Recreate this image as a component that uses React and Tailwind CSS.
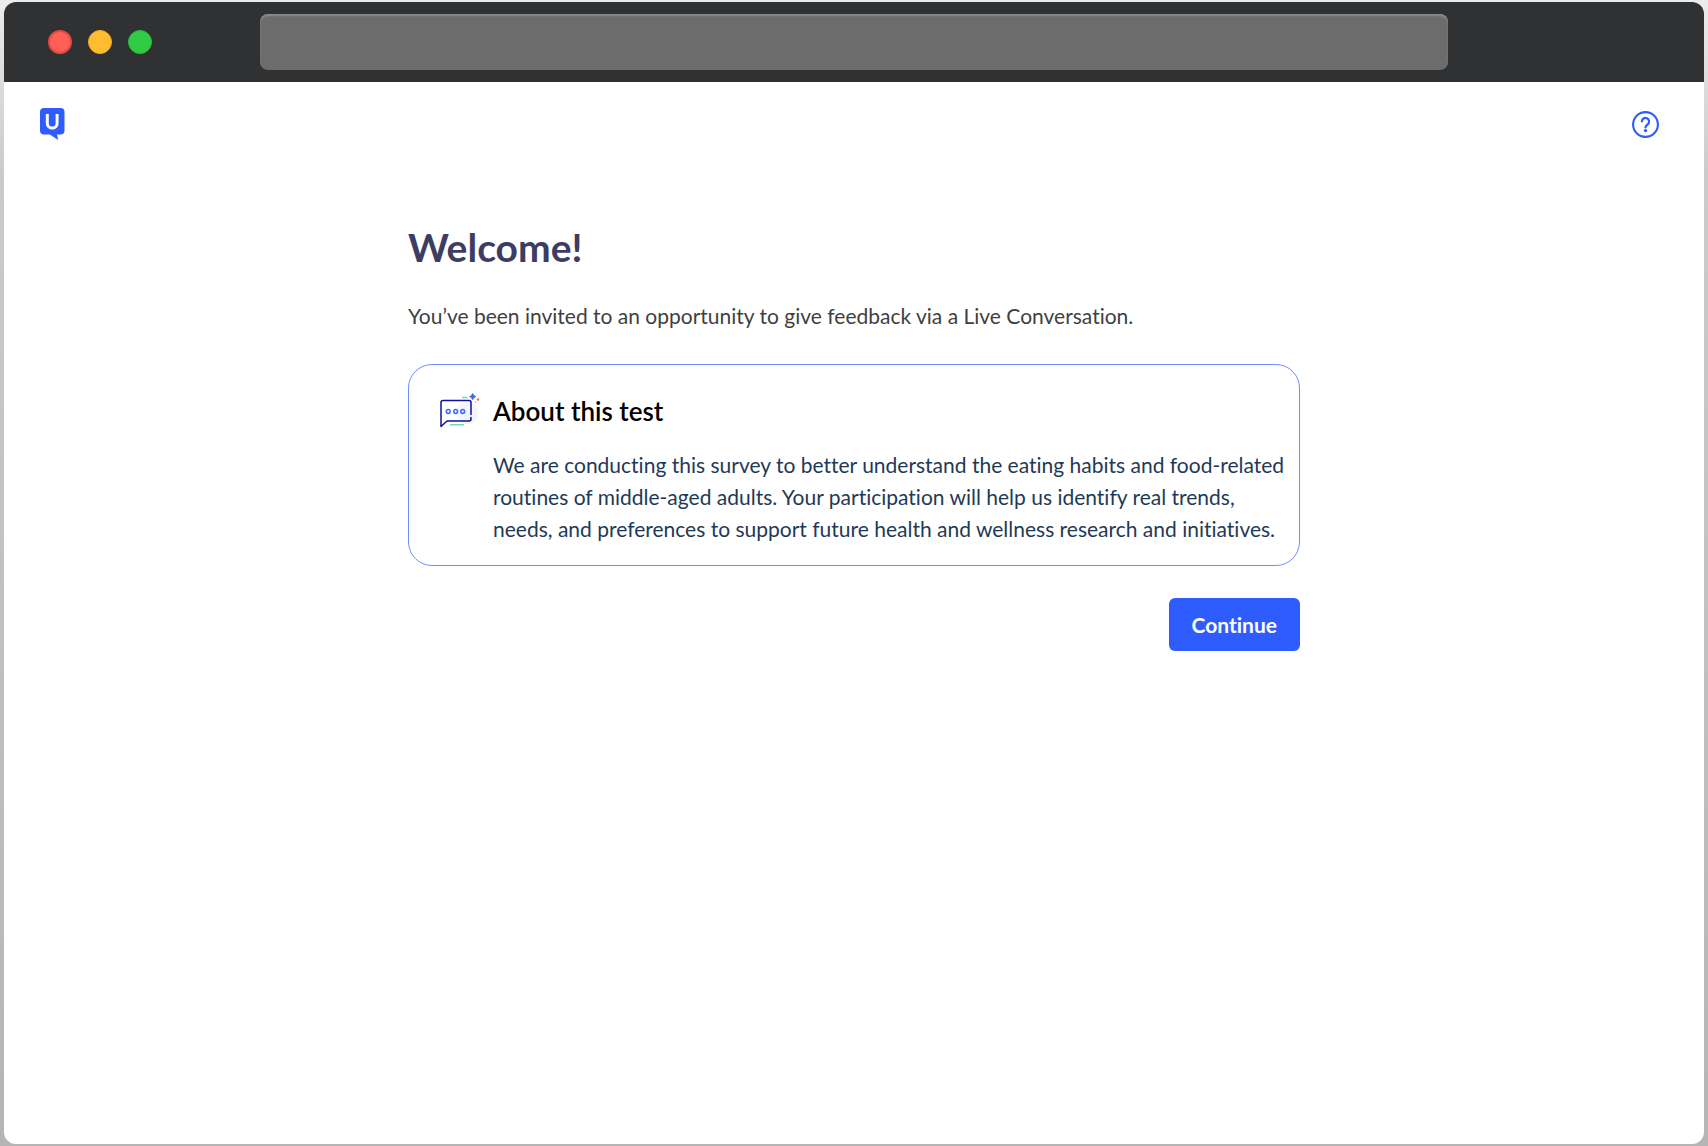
function UserLogo() {
  return (
    <svg width="25" height="32" viewBox="0 0 25 32" fill="none" aria-hidden="true">
      <path
        d="M4 0h16.500a4 4 0 0 1 4 4v18.500a4 4 0 0 1-4 4h-3.500l1.200 5.500-8.400-5.500H4a4 4 0 0 1-4-4V4a4 4 0 0 1 4-4z"
        fill="#2f5cff"
      />
      <path d="M7.300 6v9.200a4.900 4.900 0 0 0 9.800 0V6" stroke="#fff" strokeWidth="3" />
    </svg>
  )
}

function HelpIcon() {
  return (
    <svg width="27" height="27" viewBox="0 0 27 27" fill="none" aria-hidden="true">
      <circle cx="13.500" cy="13.500" r="12.400" stroke="#2f5cff" strokeWidth="2.100" />
      <path
        d="M9.900 10.500a3.600 3.600 0 1 1 6.100 2.600c-1.400 1.400-2.500 1.800-2.500 3.300"
        stroke="#2f5cff"
        strokeWidth="2.200"
        strokeLinecap="round"
      />
      <circle cx="13.500" cy="19.600" r="1.700" fill="#2f5cff" />
    </svg>
  )
}

function ChatIcon() {
  return (
    <svg width="40" height="36" viewBox="0 0 40 36" fill="none" aria-hidden="true">
      <circle cx="27" cy="20" r="11" fill="#f4f6fe" />
      <path d="M22.500 4.500h4.500M10.500 31.700h13" stroke="#6edbb2" strokeWidth="1.400" strokeLinecap="round" />
      <path
        d="M31 21.500V9.500a2 2 0 0 0-2-2H3a2 2 0 0 0-2 2v24l6-5.500h22a2 2 0 0 0 2-2v-1.500"
        stroke="#10109a"
        strokeWidth="1.500"
        strokeLinecap="round"
        strokeLinejoin="round"
      />
      <g stroke="#3d68ff" strokeWidth="1.500">
        <circle cx="8.200" cy="18.500" r="1.900" />
        <circle cx="15.700" cy="18.500" r="1.900" />
        <circle cx="22.700" cy="18.500" r="1.900" />
      </g>
      <path d="M32.700 0.500l1.200 1.900 1.900 1.200-1.900 1.200-1.200 1.900-1.200-1.900-1.900-1.200 1.900-1.200z" fill="#3d68ff" stroke="#3d68ff" strokeWidth="0.800" />
      <circle cx="38" cy="6.500" r="1.200" fill="#ff626d" />
      <circle cx="35.500" cy="9" r="0.700" fill="#ff8a91" />
    </svg>
  )
}

function TitleBar() {
  return (
    <div className="flex h-20 items-center bg-[#303133]">
      <div className="flex w-64 shrink-0 items-center gap-4 pl-11">
        <span className="size-6 rounded-full border-2 border-[#e24b41] bg-[#ff5f57]" />
        <span className="size-6 rounded-full border border-[#eeae2d] bg-[#febc2e]" />
        <span className="size-6 rounded-full border border-[#2bbb3b] bg-[#2fcb42]" />
      </div>
      <input
        type="text"
        aria-label="Address"
        className="h-14 min-w-0 flex-1 rounded-lg bg-[#6c6c6c] px-4 text-white shadow-[inset_0_2px_2px_#8a8b8d] outline-none"
      />
      <div className="w-64 shrink-0" />
    </div>
  )
}

export default function App() {
  return (
    <div className="flex min-h-screen flex-col bg-linear-to-b from-[#ececec] via-[#cbcbcb] via-15% to-[#b5b5b5] px-1 py-0.5 font-['Lato',sans-serif] [font-variant-ligatures:none]">
      <div className="flex flex-1 flex-col overflow-hidden rounded-xl bg-white">
        <TitleBar />

        <header className="flex items-start justify-between pt-6 pr-[45px] pl-9">
          <a href="#home" aria-label="Home" className="pt-0.5">
            <UserLogo />
          </a>
          <button type="button" aria-label="Help" className="pt-[5px]">
            <HelpIcon />
          </button>
        </header>

        <main className="mx-auto w-full max-w-[892px] pt-20">
          <h1 className="text-[39px] leading-[54px] font-bold text-[#3b3d62]">Welcome!</h1>
          <p className="mt-[26px] text-[21px] leading-8 text-[#3f3f41]">
            You’ve been invited to an opportunity to give feedback via a Live Conversation.
          </p>

          <section className="mt-8 flex gap-[13px] rounded-3xl border border-[#6f8dff] pt-7 pr-3 pb-5 pl-[31px]">
            <div className="shrink-0">
              <ChatIcon />
            </div>
            <div>
              <h2 className="text-[26px] leading-9 font-semibold text-black">About this test</h2>
              <p className="mt-5 text-[21px] leading-8 text-[#1f3a56]">
                We are conducting this survey to better understand the eating habits and food-related
                routines of middle-aged adults. Your participation will help us identify real trends,
                needs, and preferences to support future health and wellness research and initiatives.
              </p>
            </div>
          </section>

          <div className="mt-8 flex justify-end">
            <button
              type="button"
              className="h-[53px] rounded-md bg-[#2f5cff] px-[23px] text-[21px] font-bold text-white"
            >
              Continue
            </button>
          </div>
        </main>
      </div>
    </div>
  )
}
